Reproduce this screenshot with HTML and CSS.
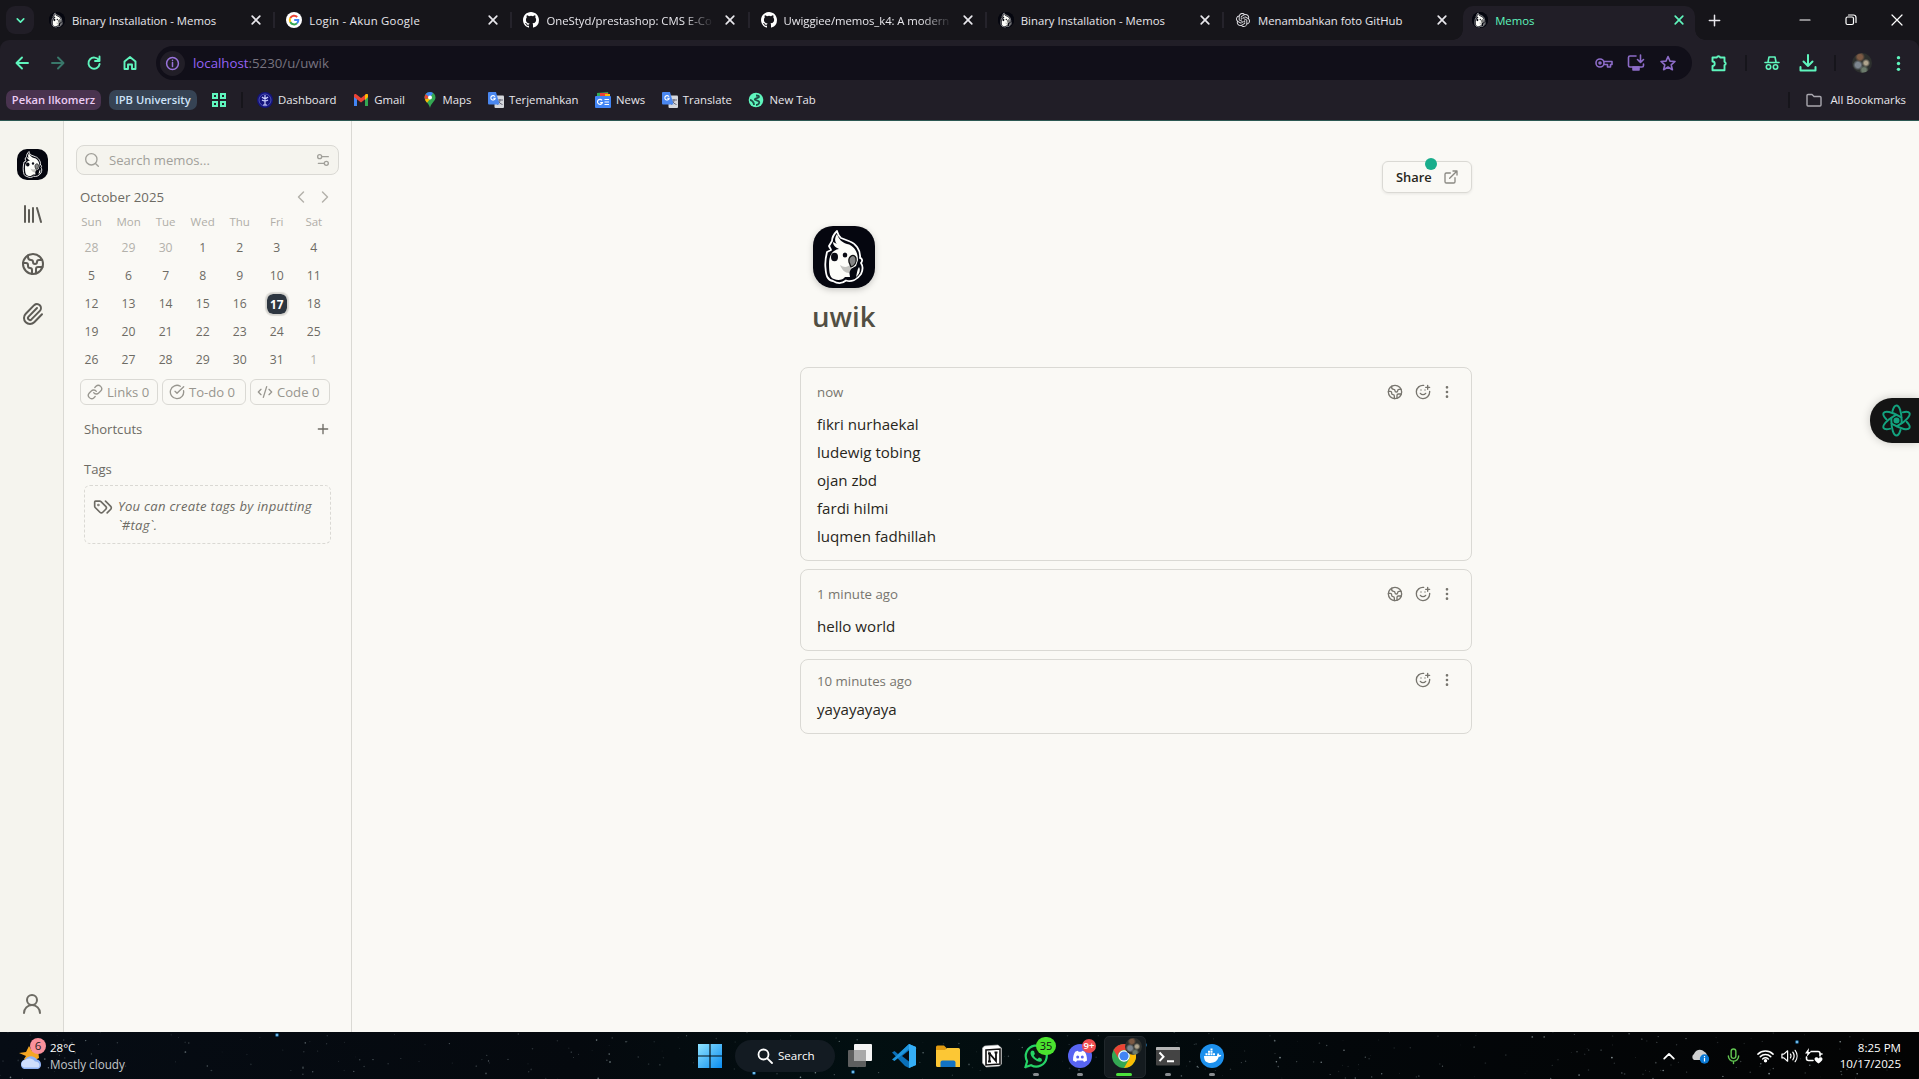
FILE: index.html
```html
<!DOCTYPE html>
<html lang="en">
<head>
<meta charset="utf-8">
<title>Memos</title>
<link rel="stylesheet" href="styles.css">
</head>
<body>
<svg class="sprite" width="0" height="0">
  <symbol id="parrot" viewBox="0 0 62 62">
    <rect width="62" height="62" rx="20" fill="#05060f"/>
    <path d="M24 5C20 9 19 12 19 15L16 20C17 22 18 23 18 24L14 26C13 30 12 38 12.500 42C13 49 14 54 20 55C25 58 30 57 33 54.500C38 56 44 54 48 48C50 44 50 40 48 37C50 35 49 32 47 32C48 24 42 17 37 15.500L28 12C25 10 25 8 24 5Z" fill="#05060f" stroke="#fff" stroke-width="1.800" stroke-linejoin="round"/>
    <path d="M24 8C21 13 22 16 24 18L20 16C20 20 24 22 26 23C19 24 16 30 16 38C16 47 17 52 21 53C25 55 30 54 32 51L37 51L36 44L43 40L45 34C45 25 40 19 34 18C28 16 26 13 24 8Z" fill="#fdfdf9"/>
    <path d="M27 39C31 42 35 41 37 39L38 43L36 47C32 47 29 44 27 39Z" fill="#c4c4c0"/>
    <path d="M46 41C48 44 46 49 43 51C44 47 44 44 46 41Z" fill="#fdfdf9"/>
    <ellipse cx="21.500" cy="31" rx="3.500" ry="4.200" fill="#0a0b14"/>
    <ellipse cx="32" cy="29" rx="2.300" ry="2.500" fill="#0a0b14"/>
    <path d="M36 36C35 30 41 27 43 32C44 37 41 40 38 41Z" fill="#858585" stroke="#111" stroke-width="1.300"/>
  </symbol>
  <symbol id="earth" viewBox="0 0 24 24"><path d="M21.540 15H17a2 2 0 0 0-2 2v4.540M7 3.340V5a3 3 0 0 0 3 3 2 2 0 0 1 2 2c0 1.100.9 2 2 2a2 2 0 0 0 2-2c0-1.100.9-2 2-2h3.170M11 21.950V18a2 2 0 0 0-2-2 2 2 0 0 1-2-2v-1a2 2 0 0 0-2-2H2.050"/><circle cx="12" cy="12" r="10"/></symbol>
  <symbol id="smile" viewBox="0 0 24 24"><path d="M22 11v1a10 10 0 1 1-9-10M8 14s1.500 2 4 2 4-2 4-2M9 9h.01M15 9h.01M16 5h6M19 2v6"/></symbol>
  <symbol id="dots" viewBox="0 0 24 24"><g fill="currentColor"><circle cx="12" cy="12" r="1"/><circle cx="12" cy="5" r="1"/><circle cx="12" cy="19" r="1"/></g></symbol>
  <symbol id="x" viewBox="0 0 16 16"><path d="M4.200 4.200l7.600 7.600M11.800 4.200l-7.600 7.600"/></symbol>
  <symbol id="github" viewBox="0 0 16 16"><path fill="#fff" stroke="none" d="M8 0C3.580 0 0 3.580 0 8c0 3.540 2.290 6.530 5.470 7.590.4.070.55-.17.55-.38 0-.19-.01-.82-.01-1.490-2.010.37-2.530-.49-2.690-.94-.09-.23-.48-.94-.82-1.130-.28-.15-.68-.52-.01-.53.63-.01 1.080.58 1.230.82.72 1.210 1.870.87 2.330.66.070-.52.28-.87.51-1.070-1.780-.2-3.640-.89-3.640-3.950 0-.87.31-1.590.82-2.150-.08-.2-.36-1.020.08-2.120 0 0 .67-.21 2.200.82a7.600 7.600 0 0 1 4 0c1.530-1.040 2.200-.82 2.200-.82.44 1.100.16 1.920.08 2.120.51.56.82 1.270.82 2.150 0 3.070-1.870 3.750-3.650 3.950.29.25.54.73.54 1.480 0 1.070-.01 1.930-.01 2.200 0 .21.15.46.55.38A8 8 0 0 0 16 8c0-4.420-3.580-8-8-8z"/></symbol>
  <symbol id="gtrans" viewBox="0 0 16 16"><rect x="6.500" y="3.500" width="9.500" height="12.500" rx="1" fill="#d5d7dc"/><path d="M9 8h6M12 7v1c0 2-1 3.500-3 4.500M10.500 9c.5 1.500 2 3 4 3.500" stroke="#667" stroke-width="1" fill="none"/><path d="M1 0h7l3.500 12.500H1a1 1 0 0 1-1-1V1a1 1 0 0 1 1-1z" fill="#4a87f0"/><path d="M7 4.800A2.200 2.200 0 1 0 7.200 6.300H5.200" stroke="#fff" stroke-width="1.100" fill="none"/></symbol>
  <symbol id="knot" viewBox="0 0 24 24"><path fill="#e4e3e8" stroke="none" d="M22.2819 9.8211a5.9847 5.9847 0 0 0-.5157-4.9108 6.0462 6.0462 0 0 0-6.5098-2.9A6.0651 6.0651 0 0 0 4.9807 4.1818a5.9847 5.9847 0 0 0-3.9977 2.9 6.0462 6.0462 0 0 0 .7427 7.0966 5.98 5.98 0 0 0 .511 4.9107 6.051 6.051 0 0 0 6.5146 2.9001A5.9847 5.9847 0 0 0 13.2599 24a6.0557 6.0557 0 0 0 5.7718-4.2058 5.9894 5.9894 0 0 0 3.9977-2.9001 6.0557 6.0557 0 0 0-.7475-7.0729zm-9.022 12.6081a4.4755 4.4755 0 0 1-2.8764-1.0408l.1419-.0804 4.7783-2.7582a.7948.7948 0 0 0 .3927-.6813v-6.7369l2.02 1.1686a.071.071 0 0 1 .038.052v5.5826a4.504 4.504 0 0 1-4.4945 4.4944zm-9.6607-4.1254a4.4708 4.4708 0 0 1-.5346-3.0137l.142.0852 4.783 2.7582a.7712.7712 0 0 0 .7806 0l5.8428-3.3685v2.3324a.0804.0804 0 0 1-.0332.0615L9.74 19.9502a4.4992 4.4992 0 0 1-6.1408-1.6464zM2.3408 7.8956a4.485 4.485 0 0 1 2.3655-1.9728V11.6a.7664.7664 0 0 0 .3879.6765l5.8144 3.3543-2.0201 1.1685a.0757.0757 0 0 1-.071 0l-4.8303-2.7865A4.504 4.504 0 0 1 2.3408 7.872zm16.5963 3.8558L13.1038 8.364 15.1192 7.2a.0757.0757 0 0 1 .071 0l4.8303 2.7913a4.4944 4.4944 0 0 1-.6765 8.1042v-5.6772a.79.79 0 0 0-.407-.667zm2.0107-3.0231l-.142-.0852-4.7735-2.7818a.7759.7759 0 0 0-.7854 0L9.409 9.2297V6.8974a.0662.0662 0 0 1 .0284-.0615l4.8303-2.7866a4.4992 4.4992 0 0 1 6.6802 4.66zM8.3065 12.863l-2.02-1.1638a.0804.0804 0 0 1-.038-.0567V6.0742a4.4992 4.4992 0 0 1 7.3757-3.4537l-.142.0805L8.704 5.459a.7948.7948 0 0 0-.3927.6813zm1.0976-2.3654l2.602-1.4998 2.6069 1.4998v2.9994l-2.5974 1.4997-2.6067-1.4997Z"/></symbol>
</svg>

<header class="browser">
  <div class="tabs">
    <button class="tab-search"><svg class="ln" viewBox="0 0 16 16" width="16" height="16" stroke-width="2"><path d="M4 6l4 4 4-4"/></svg></button>
    <div class="tab"><span class="fav round"><svg viewBox="6 2 50 58"><use href="#parrot" width="62" height="62"/></svg></span><span class="tt">Binary Installation - Memos</span><svg class="ln cl"><use href="#x"/></svg></div>
    <div class="tab"><span class="fav"><svg viewBox="0 0 16 16"><circle cx="8" cy="8" r="8" fill="#fff"/><g fill="none" stroke-width="2"><path d="M11.200 5A4.300 4.300 0 0 0 4.300 6" stroke="#ea4335"/><path d="M4.300 6a4.300 4.300 0 0 0 0 4" stroke="#fbbc05"/><path d="M4.300 10a4.300 4.300 0 0 0 6.700 1.300" stroke="#34a853"/><path d="M11 11.300A4.300 4.300 0 0 0 12.300 8H8.200" stroke="#4285f4"/></g></svg></span><span class="tt wide">Login - Akun Google</span><svg class="ln cl"><use href="#x"/></svg></div>
    <div class="tab"><span class="fav"><svg><use href="#github"/></svg></span><span class="tt fade">OneStyd/prestashop: CMS E-Co</span><svg class="ln cl"><use href="#x"/></svg></div>
    <div class="tab"><span class="fav"><svg><use href="#github"/></svg></span><span class="tt fade snug">Uwiggiee/memos_k4: A modern</span><svg class="ln cl"><use href="#x"/></svg></div>
    <div class="tab"><span class="fav round"><svg viewBox="6 2 50 58"><use href="#parrot" width="62" height="62"/></svg></span><span class="tt">Binary Installation - Memos</span><svg class="ln cl"><use href="#x"/></svg></div>
    <div class="tab last"><span class="fav knot"><svg><use href="#knot"/></svg></span><span class="tt">Menambahkan foto GitHub</span><svg class="ln cl"><use href="#x"/></svg></div>
    <div class="tab active"><span class="fav round"><svg viewBox="6 2 50 58"><use href="#parrot" width="62" height="62"/></svg></span><span class="tt">Memos</span><svg class="ln cl"><use href="#x"/></svg></div>
    <svg class="ln newtab" viewBox="0 0 16 16"><path d="M8 2.500v11M2.500 8h11"/></svg>
    <div class="winbtns">
      <svg class="ln" viewBox="0 0 12 12"><path d="M1 6h10"/></svg>
      <svg class="ln" viewBox="0 0 12 12"><rect x="1" y="3" width="7.500" height="7.500" rx="1.500"/><path d="M3.500 1h5a2.500 2.500 0 0 1 2.500 2.500v5"/></svg>
      <svg class="ln" viewBox="0 0 12 12"><path d="M1 1l10 10M11 1L1 11"/></svg>
    </div>
  </div>
  <div class="toolbar">
    <div class="nav">
      <svg class="ln" viewBox="0 0 16 16"><path d="M14 8H3M8 2.500L2.500 8 8 13.500"/></svg>
      <svg class="ln dim" viewBox="0 0 16 16"><path d="M2 8h11M8 2.500L13.500 8 8 13.500"/></svg>
      <svg class="ln" viewBox="0 0 16 16"><path d="M13 5.500A5.600 5.600 0 1 0 13.600 9M13.500 1.500V6H9"/></svg>
      <svg class="ln" viewBox="0 0 16 16"><path d="M2.500 14V6.500L8 2l5.500 4.500V14H10V9.500H6V14z"/></svg>
    </div>
    <div class="omni">
      <span class="info"><svg class="ln" viewBox="0 0 16 16" width="16" height="16"><circle cx="8" cy="8" r="6.300"/><path d="M8 7v4.300M8 4.500v.3"/></svg></span>
      <span class="url"><b>localhost</b>:5230/u/uwik</span>
      <span class="oicons">
        <svg class="ln" viewBox="0 0 18 18"><circle cx="5" cy="9" r="4"/><circle cx="5" cy="9" r="1" fill="currentColor"/><path d="M9 7.500h8v3h-1.500v2.500h-3v-2.500H9"/></svg>
        <svg class="ln" viewBox="0 0 18 18"><path d="M9 2H3a1.500 1.500 0 0 0-1.500 1.500v8A1.500 1.500 0 0 0 3 13h12a1.500 1.500 0 0 0 1.500-1.500V10M13.500 1v7M10.500 5.500l3 3 3-3"/><path d="M6 13h6v3H6z" fill="currentColor"/></svg>
        <svg class="ln" viewBox="0 0 18 18"><path d="M9 2.500l2 4.600 5 .4-3.800 3.300 1.200 4.900L9 13l-4.400 2.700 1.200-4.900L2 7.500l5-.4z"/></svg>
      </span>
    </div>
    <svg class="ln ext" viewBox="0 0 18 18"><path d="M2.500 3.500h4.300a1.800 1.800 0 0 1 3.400 0h4.300v4.300a1.800 1.800 0 0 1 0 3.400v5h-12v-4.300a2.200 2.200 0 0 0 0-4.400z"/></svg>
    <i class="tsep s1"></i>
    <svg class="ln inc" viewBox="0 0 16 16"><path d="M1 7.500h14M4 7l1-5h6l1 5"/><circle cx="4.500" cy="12" r="2.200"/><circle cx="11.500" cy="12" r="2.200"/></svg>
    <svg class="ln dl" viewBox="0 0 18 18"><path d="M9 1v11M4.500 7.500L9 12l4.500-4.500M1.500 13v3.500h15V13"/></svg>
    <i class="tsep s2"></i>
    <span class="me"></span>
    <svg class="kebab" viewBox="0 0 16 16" fill="#5ff5bd"><circle cx="8" cy="2.500" r="1.600"/><circle cx="8" cy="8" r="1.600"/><circle cx="8" cy="13.500" r="1.600"/></svg>
  </div>
  <div class="marks">
    <span class="chip purple">Pekan Ilkomerz</span><span class="chip blue">IPB University</span>
    <svg class="ln apps" viewBox="0 0 16 16"><path d="M2 2h4v4H2zM10 2h4v4h-4zM2 10h4v4H2zM10 10h4v4h-4z"/></svg>
    <i class="tsep s3"></i>
    <div class="bms">
    <span class="bm"><svg viewBox="0 0 16 16"><circle cx="8" cy="8" r="8" fill="#14147c"/><circle cx="8" cy="8" r="6" fill="none" stroke="#5b5fc4" stroke-width=".8"/><path d="M8 3v10M5 5q3 3 6 0M5 8q3 2 6 0M6 13h4" stroke="#cfd3ff" stroke-width="1.200" fill="none"/></svg>Dashboard</span>
    <span class="bm"><svg viewBox="0 0 16 16"><path d="M1 3v11h3V7z" fill="#4285f4"/><path d="M15 3v11h-3V7z" fill="#34a853"/><path d="M1 5V3.500C1 2 2.500 1.700 3.500 2.500L8 6l4.500-3.500C13.500 1.700 15 2 15 3.500V5l-7 5.500z" fill="#ea4335"/><path d="M15 5V3.500c0-1.500-1.500-1.800-2.500-1L12 3v5z" fill="#fbbc04"/></svg>Gmail</span>
    <span class="bm"><svg viewBox="0 0 16 16"><path d="M8 0a5.500 5.500 0 0 0-5.500 5.500C2.500 9 7 11 8 16c1-5 5.500-7 5.500-10.500A5.500 5.500 0 0 0 8 0z" fill="#34a853"/><path d="M8 0a5.500 5.500 0 0 0-4.500 2.300L8 5.500l3-4.500A5.500 5.500 0 0 0 8 0z" fill="#4285f4"/><path d="M3.500 2.300a5.500 5.500 0 0 0-.5 5L8 5.500z" fill="#ea4335"/><path d="M3 7.300C3.300 8.500 4.300 10 5 10.800L9 6z" fill="#fbbc04"/><circle cx="8" cy="5.500" r="2" fill="#fff"/></svg>Maps</span>
    <span class="bm"><svg><use href="#gtrans"/></svg>Terjemahkan</span>
    <span class="bm"><svg viewBox="0 0 16 16"><path d="M2 1l11-1 1 5H2z" fill="#34a853"/><path d="M5 1h8v4H5z" fill="#ea4335"/><rect x="10" y="2" width="5" height="4" fill="#fbbc04"/><rect y="4" width="16" height="12" rx="1" fill="#4285f4"/><path d="M7 8.300A2.500 2.500 0 1 0 7.400 10.500H5.200M9.500 7.500h4.500M9.500 10h4.500M9.500 12.500h4.500" stroke="#fff" stroke-width="1.200" fill="none"/></svg>News</span>
    <span class="bm"><svg><use href="#gtrans"/></svg>Translate</span>
    <span class="bm"><svg viewBox="0 0 16 16"><circle cx="8" cy="8" r="7.300" fill="#5ff5bd"/><path d="M8 3.500c2 0 3 .5 3 1.500S8 5.500 7 7s3 1 4 2.500-1 3.500-3 3.500M2 8c2 0 2 1 3 2s1 1 1 3" stroke="#1d4e45" stroke-width="1.800" fill="none"/></svg>New Tab</span>
    </div>
    <span class="allbm"><svg class="ln" viewBox="0 0 16 16"><path d="M1 13V3.500A1 1 0 0 1 2 2.500h4l2 2h6a1 1 0 0 1 1 1V13a1 1 0 0 1-1 1H2a1 1 0 0 1-1-1z"/></svg>All Bookmarks</span>
  </div>
</header>

<div class="app">
  <nav class="rail">
    <svg class="logo" viewBox="0 0 62 62"><use href="#parrot"/></svg>
    <svg class="ln" viewBox="0 0 24 24"><path d="M16 6l4 14M12 6v14M8 8v12M4 4v16"/></svg>
    <svg class="ln"><use href="#earth"/></svg>
    <svg class="ln" viewBox="0 0 24 24"><path d="M16 6l-8.414 8.586a2 2 0 0 0 2.828 2.828l8.414-8.586a4 4 0 0 0-5.656-5.656l-8.415 8.585a6 6 0 1 0 8.486 8.486L21 12.300"/></svg>
    <svg class="ln user" viewBox="0 0 24 24"><circle cx="12" cy="8" r="5"/><path d="M20 21a8 8 0 0 0-16 0"/></svg>
  </nav>
  <aside class="side">
    <div class="search"><svg class="ln" viewBox="0 0 24 24"><circle cx="11" cy="11" r="8.500"/><path d="M21.500 21.500l-4.300-4.300"/></svg><span>Search memos...</span><svg class="ln" viewBox="0 0 24 24"><path d="M20 7h-9M14 17H5"/><circle cx="17" cy="17" r="3"/><circle cx="7" cy="7" r="3"/></svg></div>
    <div class="month"><span>October 2025</span><svg class="ln" viewBox="0 0 24 24"><path d="M15 18l-6-6 6-6"/></svg><svg class="ln" viewBox="0 0 24 24"><path d="M9 18l6-6-6-6"/></svg></div>
    <div class="week"><span>Sun</span><span>Mon</span><span>Tue</span><span>Wed</span><span>Thu</span><span>Fri</span><span>Sat</span></div>
    <div class="days">
      <i>28</i><i>29</i><i>30</i><span>1</span><span>2</span><span>3</span><span>4</span>
      <span>5</span><span>6</span><span>7</span><span>8</span><span>9</span><span>10</span><span>11</span>
      <span>12</span><span>13</span><span>14</span><span>15</span><span>16</span><span><b>17</b></span><span>18</span>
      <span>19</span><span>20</span><span>21</span><span>22</span><span>23</span><span>24</span><span>25</span>
      <span>26</span><span>27</span><span>28</span><span>29</span><span>30</span><span>31</span><i>1</i>
    </div>
    <div class="stats">
      <span class="links"><svg class="ln" viewBox="0 0 24 24"><path d="M10 13a5 5 0 0 0 7.540.54l3-3a5 5 0 0 0-7.070-7.070l-1.720 1.710M14 11a5 5 0 0 0-7.540-.54l-3 3a5 5 0 0 0 7.070 7.070l1.710-1.710"/></svg>Links 0</span>
      <span class="todo"><svg class="ln" viewBox="0 0 24 24"><path d="M21.800 10A10 10 0 1 1 17 3.335M9 11l3 3L22 4"/></svg>To-do 0</span>
      <span class="code"><svg class="ln" viewBox="0 0 24 24"><path d="M18 16l4-4-4-4M6 8l-4 4 4 4M14.500 4l-5 16"/></svg>Code 0</span>
    </div>
    <div class="sect"><span>Shortcuts</span><svg class="ln" viewBox="0 0 24 24"><path d="M5 12h14M12 5v14"/></svg></div>
    <div class="sect tags"><span>Tags</span></div>
    <div class="hint"><svg class="ln" viewBox="0 0 24 24"><path d="M15 5l6.300 6.300a2.400 2.400 0 0 1 0 3.400L17 19M9.586 5.586A2 2 0 0 0 8.172 5H3a1 1 0 0 0-1 1v5.172a2 2 0 0 0 .586 1.414L8.290 18.290a2.426 2.426 0 0 0 3.420 0l3.580-3.580a2.426 2.426 0 0 0 0-3.420z"/><circle cx="6.500" cy="9.500" r=".5"/></svg><p>You can create tags by inputting<br>`#tag`.</p></div>
  </aside>
  <main class="main">
    <div class="col">
      <div class="sharerow"><button class="share">Share<svg class="ln" viewBox="0 0 24 24"><path d="M15 3h6v6M10 14L21 3M18 13v6a2 2 0 0 1-2 2H5a2 2 0 0 1-2-2V8a2 2 0 0 1 2-2h6"/></svg><em class="dot"></em></button></div>
      <svg class="avatar" viewBox="0 0 62 62"><use href="#parrot"/></svg>
      <h1>uwik</h1>
      <article class="memo"><header><time>now</time><svg class="ln"><use href="#earth"/></svg><svg class="ln"><use href="#smile"/></svg><svg class="ln"><use href="#dots"/></svg></header>
        <p>fikri nurhaekal<br>ludewig tobing<br>ojan zbd<br>fardi hilmi<br>luqmen fadhillah</p></article>
      <article class="memo"><header><time>1 minute ago</time><svg class="ln"><use href="#earth"/></svg><svg class="ln"><use href="#smile"/></svg><svg class="ln"><use href="#dots"/></svg></header>
        <p>hello world</p></article>
      <article class="memo tight"><header><time>10 minutes ago</time><svg class="ln"><use href="#smile"/></svg><svg class="ln"><use href="#dots"/></svg></header>
        <p>yayayayaya</p></article>
    </div>
    <div class="widget"><svg class="ln" viewBox="0 0 32 32"><g stroke-dasharray="40 10"><ellipse cx="16" cy="16" rx="5" ry="14.500" pathLength="100" stroke-dashoffset="-14"/><ellipse cx="16" cy="16" rx="5" ry="14.500" pathLength="100" stroke-dashoffset="-14" transform="rotate(60 16 16)"/><ellipse cx="16" cy="16" rx="5" ry="14.500" pathLength="100" stroke-dashoffset="-14" transform="rotate(120 16 16)"/></g><circle cx="16" cy="16" r="2" fill="currentColor"/></svg></div>
  </main>
</div>

<footer class="taskbar">
  <svg class="stars" id="stars" width="1919" height="47"></svg>
  <div class="weather">
    <svg viewBox="0 0 30 34" width="30" height="34"><path d="M10 6l3 5 6-2 1 9-12 6-3-5 2-3-7-3 7-1z" fill="#f5a623"/><path d="M5 29a5 5 0 0 1 1-9.500 7 6.500 0 0 1 12 0A5 5 0 0 1 19 29z" fill="#8fb2f3"/><path d="M5 27.500a4.500 4 0 0 1 1-7.500 6.500 6 0 0 1 10 1.500 4 4 0 0 1 4 6z" fill="#cfdefb"/></svg>
    <em class="wbadge">6</em>
    <p>28°C<br><span>Mostly cloudy</span></p>
  </div>
  <div class="dock">
    <span class="it"><svg viewBox="0 0 24 24"><defs><linearGradient id="wg" x2="1" y2="1"><stop stop-color="#8fe3ff"/><stop offset="1" stop-color="#0a8cf0"/></linearGradient></defs><path d="M0 0h11.400v11.400H0zM12.600 0H24v11.400H12.600zM0 12.600h11.400V24H0zM12.600 12.600H24V24H12.600z" fill="url(#wg)"/></svg></span>
    <span class="find"><svg class="ln" viewBox="0 0 16 16" width="16" height="16"><circle cx="6.500" cy="6.500" r="5"/><path d="M10.300 10.300L15 15"/></svg>Search</span>
    <span class="it"><svg viewBox="0 0 24 24"><rect x="6" width="18" height="17" rx="1" fill="#f4f4f4"/><rect y="6" width="18" height="17" rx="1" fill="#666" opacity=".92"/><path d="M6 6h12v11H6z" fill="#a9a9a9"/></svg></span>
    <span class="it"><svg viewBox="0 0 24 24"><path d="M17 0L6 10 2.500 7 0 8.500 13 22l4 2z" fill="#0a6fb8"/><path d="M0 15.500L2.500 17 17 5v19l7-3V3l-7-3L6.500 10z" fill="#1f95dd"/><path d="M17 0l7 3v18l-7 3z" fill="#35aef5"/><path d="M17 6.500V17.500L10 12z" fill="#060a10"/></svg></span>
    <span class="it"><svg viewBox="0 0 24 24"><path d="M0 3a1.500 1.500 0 0 1 1.500-1.500H8L10.500 4v4H0z" fill="#e09a10"/><path d="M0 6h9l2-2h11.500A1.500 1.500 0 0 1 24 5.500V23H1.500A1.500 1.500 0 0 1 0 21.500z" fill="#fcc735"/><path d="M4.500 23v-4.500a2 2 0 0 1 2-2h11a2 2 0 0 1 2 2V23z" fill="#1272c4"/></svg></span>
    <span class="it"><svg viewBox="0 0 24 24"><path d="M2.500 4l2-2L18 1l3.500 3v16l-2 2L6 23l-3.500-4z" fill="#fff" stroke="#bbb" stroke-width=".6"/><path d="M6 6l14-1v15L6 21z" fill="#fff" stroke="#111" stroke-width="1.600"/><path d="M9.500 17.500v-8l6.500 7.500V8.500M8 9.500h3M14.500 8.500h3M8 17.500h3" stroke="#111" stroke-width="1.800" fill="none"/></svg></span>
    <span class="it run"><svg viewBox="0 0 24 24"><path d="M1.500 23l1.600-5.800a10.500 10.500 0 1 1 4 4z" fill="#0a1410" stroke="#25d366" stroke-width="2.200"/><path d="M8 6.500c-3 2-1 6 2 8.500s6.500 4 8 1.500l-.5-2-2.500-1-1.500 1.500c-2-.8-3-2-3.800-3.500l1.200-1.500L10 7z" fill="#25d366"/></svg><em class="bdg wa">35</em></span>
    <span class="it run"><svg viewBox="0 0 24 24"><circle cx="12" cy="12" r="12" fill="#5865f2"/><path d="M5 16.500C5 12 6 9 7.500 7.500L10 6.800l.5 1h3l.5-1 2.500.7C18 9 19 12 19 16.500l-3 1.500-1-1.500H9L8 18z" fill="#fff"/><circle cx="9.700" cy="13" r="1.500" fill="#5865f2"/><circle cx="14.300" cy="13" r="1.500" fill="#5865f2"/></svg><em class="bdg dc">9+</em></span>
    <span class="it on"><svg viewBox="0 0 24 24"><circle cx="12" cy="12" r="12" fill="#34a853"/><path d="M12 0a12 12 0 0 1 10.400 6H12a6 6 0 0 0-5.200 9L1.600 6A12 12 0 0 1 12 0z" fill="#ea4335"/><path d="M22.400 6A12 12 0 0 1 12 24l5.200-9A6 6 0 0 0 12 6z" fill="#fbbc05"/><circle cx="12" cy="12" r="5.800" fill="#fff"/><circle cx="12" cy="12" r="4.600" fill="#4285f4"/></svg><em class="me mini"></em></span>
    <span class="it run"><svg viewBox="0 0 24 24"><rect y="3" width="24" height="18.500" rx="1" fill="#444"/><path d="M1 3h22a1 1 0 0 1 1 1v2H0V4a1 1 0 0 1 1-1z" fill="#b5b5b5"/><path d="M3.500 8.500l4 4.300-4 4.300M11 17.300h7" stroke="#fff" stroke-width="2" fill="none"/></svg></span>
    <span class="it run"><svg viewBox="0 0 24 24"><circle cx="12" cy="12" r="12" fill="#1d90ed"/><path d="M4 12h13c0-1.500.5-2.500 1-3 .8.500 1.200 1.300 1.300 2 .8-.2 1.500 0 2 .2-.4 1-1.500 1.600-2.600 1.600C17.500 17 14.500 19 10.500 19 6.500 19 4 17 4 12zM5.500 9.300h2v2h-2zM8 9.300h2v2H8zM10.500 9.300h2v2h-2zM13 9.300h2v2h-2zM8 6.800h2v2H8zM10.500 6.800h2v2h-2zM10.500 4.500h2v1.800h-2z" fill="#fff"/></svg></span>
  </div>
  <div class="tray">
    <svg class="ln up" viewBox="0 0 16 16" width="14" height="14"><path d="M2.500 11L8 5.500l5.500 5.500"/></svg>
    <svg class="od" viewBox="0 0 18 16" width="18" height="16"><path d="M2 12a3.500 3.500 0 0 1 0-6A6 6 0 0 1 12 3.500a5 5 0 0 1 3 4V12z" fill="#cfcfcf"/><circle cx="12.500" cy="11" r="4.700" fill="#0a78d4"/><path d="M12.500 10v3.500M12.500 8v1.200" stroke="#fff" stroke-width="1.200"/></svg>
    <svg class="ln mic" viewBox="0 0 16 18" width="15" height="18"><rect x="5.500" y="1.500" width="5" height="10" rx="2.500"/><path d="M2.500 9a5.500 5.500 0 0 0 11 0M8 14.500V17"/></svg>
    <svg class="ln wifi" viewBox="0 0 18 14" width="17" height="14"><path d="M1 5a11.500 11.500 0 0 1 16 0M3.500 7.700a8 8 0 0 1 11 0M6 10.200a4.500 4.500 0 0 1 6 0"/><circle cx="9" cy="12" r="1" fill="currentColor"/></svg>
    <svg class="ln vol" viewBox="0 0 18 14" width="17" height="14"><path d="M1 5h2L7 1.500v11L3 9H1zM10 5a4 4 0 0 1 0 4M12.500 3a7 7 0 0 1 0 8M15 1a10 10 0 0 1 0 12"/></svg>
    <svg class="ln" viewBox="0 0 18 16" width="18" height="16"><path d="M6 3.500h7a2 2 0 0 1 2 2V8M8 12.500H3.500a2 2 0 0 1-2-2V9M15.500 6h1.500"/><path d="M4 0L0 5.500h2.500L1.500 9 6 4H3.500zM13.500 10.500c-1-2-4-1.500-4 .5 0 1.500 2 3 4 4.500 2-1.500 4-3 4-4.500 0-2-3-2.500-4-.5z" fill="#fff" stroke="none"/></svg>
    <p>8:25 PM<br>10/17/2025</p>
  </div>
</footer>
<script src="stars.js"></script>
</body>
</html>
```
FILE: styles.css
```css
* { box-sizing: border-box; }
body { margin: 0; width: 1919px; height: 1079px; overflow: hidden; display: flex; flex-direction: column; font: 13.1px/20px "Open Sans", "Noto Sans", sans-serif; background: #faf9f5; }
svg { display: block; flex: none; }
.sprite { position: absolute; }
.ln { fill: none; stroke: currentColor; stroke-width: 1.6; stroke-linecap: round; stroke-linejoin: round; }
button { font: inherit; border: 0; padding: 0; background: none; }
p, h1 { margin: 0; }
em { font-style: normal; }

/* browser window */
.browser { height: 121px; background: #16151a; border-bottom: 1px solid #2c5852; color: #e8e7ec; font-size: 11.35px; flex: none; }
.tabs { height: 40px; display: flex; align-items: center; }
.tab-search { width: 28px; height: 28px; margin: 0 3px 0 6px; background: #211e27; border-radius: 9px; color: #5ff5bd; display: flex; align-items: center; justify-content: center; }
.tab-search svg { width: 13px; height: 13px; stroke-width: 2; }
.tab { width: 237.2px; height: 34px; margin-top: 6px; padding: 0 10px 6px 12px; display: flex; align-items: center; position: relative; flex: none; }
.tab::after { content: ""; position: absolute; right: -1px; top: 6px; width: 2px; height: 16px; background: #25232b; }
.tab.last::after, .tab.active::after { background: none; }
.fav { width: 16px; height: 16px; flex: none; }
.fav svg { width: 16px; height: 16px; }
.knot svg { width: 14px; height: 14px; margin: 1px; }
.round { border-radius: 50%; overflow: hidden; background: #05060f; }
.tt { width: 168px; margin-left: 7px; margin-top: 2px; white-space: nowrap; }
.wide { letter-spacing: .28px; }
.snug { letter-spacing: -.06px; }
.fade { -webkit-mask-image: linear-gradient(90deg, #000 82%, transparent); mask-image: linear-gradient(90deg, #000 82%, transparent); }
.cl { width: 16px; height: 16px; margin-left: 8px; stroke-width: 1.7; }
.tab.active { width: 232px; margin-left: 3px; padding-left: 9px; padding-right: 8px; background: #211e27; border-radius: 10px 10px 0 0; color: #5ff5bd; }
.tab.active .cl { margin-left: auto; }
.tab.active::before, .tab.active::after { content: ""; position: absolute; top: auto; bottom: 0; width: 10px; height: 10px; }
.tab.active::before { left: -10px; background: radial-gradient(circle at 0 0, transparent 9.500px, #211e27 10px); }
.tab.active::after { right: -10px; background: radial-gradient(circle at 100% 0, transparent 9.500px, #211e27 10px); }
.newtab { width: 15px; height: 15px; margin-left: 12px; }
.winbtns { margin-left: auto; display: flex; gap: 34px; padding-right: 16px; color: #fff; }
.winbtns svg { width: 12px; height: 12px; stroke-width: 1.2; }
.toolbar { height: 46px; background: #211e27; border-radius: 9px 9px 0 0; display: flex; align-items: center; color: #5ff5bd; }
.nav { width: 156px; display: flex; gap: 20px; padding-left: 14px; }
.nav svg { width: 16px; height: 16px; stroke-width: 1.900; }
.nav .dim { color: #39776a; }
.omni { width: 1536px; height: 34px; border-radius: 17px; background: #110f19; display: flex; align-items: center; padding: 0 15px 0 4px; }
.info { width: 25px; height: 25px; border-radius: 50%; background: #211e27; color: #9a74dd; display: flex; align-items: center; justify-content: center; }
.info svg { width: 15px; height: 15px; }
.url { font-size: 13.25px; margin-left: 8px; color: #77737f; }
.url b { font-weight: 400; color: #9462f5; }
.oicons { margin-left: auto; display: flex; gap: 14px; color: #8d6cc8; }
.oicons svg { width: 18px; height: 18px; }
.ext { width: 18px; height: 18px; margin-left: 18px; stroke-width: 1.900; }
.tsep { width: 2px; height: 16px; background: #16151b; }
.s1 { margin: 0 17px 0 17px; }
.inc { width: 16px; height: 16px; }
.dl { width: 18px; height: 18px; margin-left: 19px; stroke-width: 2; }
.s2 { margin: 0 16px 0 17px; }
.me { width: 20px; height: 20px; border-radius: 50%; background: radial-gradient(circle at 40% 20%, #7d5a44 0 12%, transparent 25%), radial-gradient(circle at 70% 50%, #b0a58e 0 10%, transparent 24%), radial-gradient(circle at 30% 60%, #7c858e 0 14%, transparent 28%), radial-gradient(circle at 60% 85%, #6c7b6c 0 10%, transparent 22%), #2d302e; }
.kebab { width: 17px; height: 17px; margin-left: 18px; }
.marks { height: 34px; background: #211e27; display: flex; align-items: center; padding: 0 13px 6px 6px; }
.chip { height: 20px; line-height: 20px; border-radius: 7px; font-weight: 600; font-size: 11.2px; text-align: center; white-space: nowrap; }
.purple { width: 95px; background: #49334f; color: #eccdf4; }
.blue { width: 88px; margin-left: 8px; background: #364354; color: #cde2f8; }
.apps { width: 16px; height: 16px; margin-left: 14px; color: #5ff5bd; stroke-width: 2; stroke-linejoin: miter; }
.s3 { margin: 0 14px 0 14px; }
.bms { display: flex; gap: 16.6px; }
.bm { display: flex; align-items: center; gap: 5px; white-space: nowrap; }
.bm svg { width: 16px; height: 16px; }
.allbm { margin-left: auto; border-left: 2px solid #16151b; height: 16px; padding-left: 16px; display: flex; align-items: center; gap: 8px; }
.allbm svg { width: 16px; height: 16px; color: #aaa8af; stroke-width: 1.400; }

/* app */
.app { flex: 1; display: flex; color: #6d6b64; min-height: 0; }
.rail { width: 64px; background: #f5f4ee; border-right: 1px solid #dad9d4; padding: 28px 0 16px 2px; display: flex; flex-direction: column; align-items: center; }
.rail svg { width: 24px; height: 24px; margin-bottom: 26px; stroke-width: 2; color: #5e5c56; }
.rail .logo { width: 31px; height: 31px; margin: 0 0 22px -1px; }
.rail .user { margin: auto 1px 0 0; color: #6d6b64; }
.side { width: 288px; border-right: 1px solid #dad9d4; padding: 24px 12px 0; flex: none; }
.search { width: 263px; height: 30px; border: 1px solid #dad9d4; border-radius: 8px; background: #f5f4ee; display: flex; align-items: center; padding: 0 7px; color: #a1a09a; }
.search svg { width: 16px; height: 16px; stroke-width: 2; }
.search span { margin: 0 auto 0 9px; }
.month { margin: 12px 4px 0 4px; height: 20px; display: flex; align-items: center; font-size: 13.25px; }
.month span { margin-right: auto; }
.month svg { width: 20px; height: 20px; margin-left: 4px; color: #b3b1ab; stroke-width: 1.700; }
.week, .days { display: grid; grid-template-columns: repeat(7, 37.05px); text-align: center; margin-left: -3px; }
.week { margin-top: 5px; height: 20px; font-size: 11.5px; color: #b0aea8; }
.days { margin-top: 2px; grid-auto-rows: 28px; line-height: 28px; font-size: 12.2px; }
.days i { font-style: normal; color: #b3b1ab; }
.days b { display: block; width: 22px; height: 22px; line-height: 20px; margin: 3px auto; background: #2d3640; background-clip: padding-box; border: 1px solid #d4d3ce; box-shadow: 0 0 1px 1px #dad9d4; border-radius: 7px; color: #fff; font-size: 11.800px; }
.stats { display: flex; gap: 4px; margin: 5px 0 0 4px; }
.stats span { height: 26px; border: 1px solid #dad9d4; border-radius: 6px; display: flex; align-items: center; gap: 4px; padding-left: 6px; white-space: nowrap; color: #98968f; }
.links { width: 78px; }
.todo { width: 84px; }
.code { width: 80px; }
.stats svg { width: 16px; height: 16px; stroke-width: 2; }
.sect { margin: 14px 6px 0 8px; height: 20px; display: flex; align-items: center; justify-content: space-between; }
.sect svg { width: 16px; height: 16px; stroke-width: 2; margin-right: 2px; }
.tags { margin-top: 20px; }
.hint { width: 247px; height: 59px; margin: 6px 0 0 8px; border: 1px dashed #dad9d4; border-radius: 6px; display: flex; gap: 5px; padding: 11px 0 0 8px; font-size: 13.1px; letter-spacing: .27px; font-style: italic; line-height: 19.200px; white-space: nowrap; }
.hint svg { width: 20px; height: 20px; stroke-width: 2; }
.main { flex: 1; display: flex; position: relative; }
.col { width: 672px; margin-left: 448px; padding-top: 40px; }
.sharerow { display: flex; justify-content: flex-end; }
.share { position: relative; width: 90px; height: 32px; border: 1px solid #dad9d4; border-radius: 6px; box-shadow: 0 1px 3px rgba(0,0,0,.08); display: flex; align-items: center; padding-left: 13px; gap: 12px; font-size: 12.900px; font-weight: 600; color: #28261b; }
.share svg { width: 16px; height: 16px; margin-left: -1px; color: #8b8983; stroke-width: 2; }
.dot { position: absolute; left: 42px; top: -4px; width: 12px; height: 12px; border-radius: 50%; background: #19ad8c; }
.avatar { width: 62px; height: 62px; margin: 33px 0 0 13px; filter: drop-shadow(0 2px 3px rgba(0,0,0,.2)); }
h1 { margin: 10px 0 32px 12px; font-size: 27.600px; line-height: 37px; font-weight: 600; color: #524f43; }
.memo { border: 1px solid #dad9d4; border-radius: 8px; margin-bottom: 8px; padding: 14px 16px 9px; height: 82px; }
.memo:first-of-type { height: 194px; }
.memo header { display: flex; align-items: center; height: 20px; color: #77756e; }
.memo time { margin-right: auto; font-size: 13.250px; }
.memo svg { width: 16px; height: 16px; stroke-width: 2; }
.memo svg + svg { margin-left: 12px; }
.memo svg:last-child { margin-left: 8px; }
.memo p { margin-top: 8px; font-size: 15.100px; line-height: 28px; color: #28261b; }
.tight { height: 75px; padding-top: 11px; }
.tight p { margin-top: 4px; }
.tight svg { margin-bottom: 2px; }
.widget { position: absolute; right: 0; top: 277px; width: 49px; height: 45px; border-radius: 22px 0 0 22px; background: #141414; color: #13a37f; display: flex; align-items: center; padding-left: 10px; box-shadow: 0 0 10px rgba(0,0,0,.2); }
.widget svg { width: 33px; height: 33px; stroke-width: 1.900; }

/* taskbar */
.taskbar { position: relative; height: 47px; flex: none; background: linear-gradient(90deg, #060c14, #05090e 30%, #020f11 45%, #03070a 70%, #030303); display: flex; color: #fff; font-size: 11.500px; line-height: 16px; }
.stars { position: absolute; left: 0; top: 0; }
.weather { position: relative; width: 698px; padding: 8px 0 0 19px; display: flex; gap: 1px; }
.weather span { color: #c4c6c9; font-size: 11.700px; }
.wbadge { position: absolute; left: 30px; top: 6px; width: 16px; height: 16px; border-radius: 50%; background: #f9919b; color: #222; text-align: center; }
.dock { position: relative; display: flex; align-items: center; height: 48px; gap: 20px; }
.it { position: relative; width: 24px; height: 24px; }
.it svg { width: 24px; height: 24px; position: relative; }
.find { width: 100px; height: 32px; margin: 0 -7px 0 -7px; border-radius: 16px; background: #131b22; display: flex; align-items: center; gap: 5px; padding-left: 22px; font-size: 11.600px; }
.find svg { stroke-width: 1.800; }
.run::after, .on::after { content: ""; position: absolute; left: 9px; bottom: -8px; width: 6px; height: 3px; border-radius: 2px; background: #888c90; }
.on::before { content: ""; position: absolute; left: -8px; top: -8px; width: 40px; height: 40px; border-radius: 5px; background: #141b1f; border: 1px solid #20272b; }
.on::after { left: 4px; width: 16px; background: #4ce33c; }
.bdg { position: absolute; text-align: center; border-radius: 10px; }
.wa { left: 12px; top: -7px; width: 20px; height: 18px; line-height: 18px; background: #4be32f; color: #111; font-size: 11px; }
.dc { left: 14px; top: -5px; width: 14px; height: 14px; line-height: 14px; background: #ee4c50; font-size: 9.500px; font-weight: 600; }
.mini { position: absolute; left: 13px; top: -6px; width: 17px; height: 17px; }
.tray { position: relative; margin-left: auto; display: flex; align-items: center; padding-right: 18px; height: 48px; }
.up { stroke-width: 2; }
.od { margin-left: 16px; }
.mic { margin-left: 16px; color: #62c552; stroke-width: 1.500; }
.wifi { margin-left: 16px; }
.vol { margin: 0 7px; stroke-width: 1.300; }
.tray p { width: 78px; text-align: right; font-size: 11.550px; }
```
FILE: stars.js
```js
// Scatter a fixed star field over the taskbar background.
var seed = 7, out = '';
function rnd() { seed = (seed * 16807) % 2147483647; return seed / 2147483647; }
for (var i = 0; i < 330; i++) {
  var x = rnd() * 1919, y = rnd() * 47, r = 0.4 + rnd() * 0.5, o = 0.12 + rnd() * rnd() * 0.6;
  out += '<circle cx="' + x.toFixed(1) + '" cy="' + y.toFixed(1) + '" r="' + r.toFixed(2) + '" fill="#cfe0e4" opacity="' + o.toFixed(2) + '"/>';
}
[[277, 3], [754, 41], [853, 40], [1145, 13], [1797, 10]].forEach(function (s) {
  out += '<circle cx="' + s[0] + '" cy="' + s[1] + '" r="2" fill="#1d5f8c"/><circle cx="' + s[0] + '" cy="' + s[1] + '" r="1" fill="#8fd4ff"/>';
});
document.getElementById('stars').innerHTML = out;
```
